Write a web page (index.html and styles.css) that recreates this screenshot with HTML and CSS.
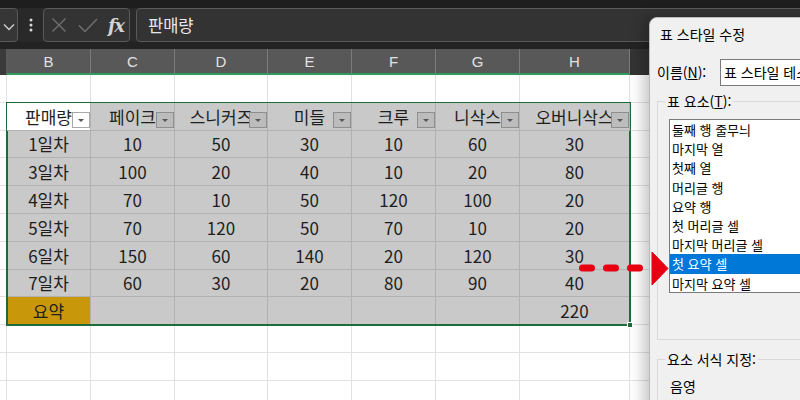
FILE: index.html
```html
<!DOCTYPE html>
<html lang="ko">
<head>
<meta charset="utf-8">
<title>표 스타일 수정</title>
<link rel="stylesheet" href="styles.css">
</head>
<body>
<div class="app">
  <div class="topstrip"></div>
  <div class="fbar">
    <div class="namebox">
      <svg class="chev" width="12" height="8" viewBox="0 0 12 8"><path d="M1 1.5 L6 6.5 L11 1.5" fill="none" stroke="#d0d0d0" stroke-width="1.4"/></svg>
    </div>
    <div class="vdots">
      <svg width="4" height="14" viewBox="0 0 4 14"><circle cx="2" cy="2" r="1.5" fill="#d8d8d8"/><circle cx="2" cy="7" r="1.5" fill="#d8d8d8"/><circle cx="2" cy="12" r="1.5" fill="#d8d8d8"/></svg>
    </div>
    <div class="fxbox">
      <svg class="ico-x" width="16" height="16" viewBox="0 0 16 16"><path d="M1.5 1.5 L14.5 14.5 M14.5 1.5 L1.5 14.5" stroke="#707070" stroke-width="1.4" fill="none"/></svg>
      <svg class="ico-ok" width="20" height="15" viewBox="0 0 20 15"><path d="M1 7.5 L7 13.5 L19 1" stroke="#707070" stroke-width="1.4" fill="none"/></svg>
      <span class="fx">fx</span>
    </div>
    <div class="finput">판매량</div>
  </div>
  <div class="fgap"></div>
  <div class="colheads">
    <div class="ch corner"></div>
    <div class="ch sel">B</div>
    <div class="ch sel">C</div>
    <div class="ch sel">D</div>
    <div class="ch sel">E</div>
    <div class="ch sel">F</div>
    <div class="ch sel">G</div>
    <div class="ch sel">H</div>
    <div class="ch rest"></div>
  </div>
  <div class="sheet">
    <div class="c"></div><div class="c"></div><div class="c"></div><div class="c"></div><div class="c"></div><div class="c"></div><div class="c"></div><div class="c"></div><div class="c"></div>

    <div class="tbl">
      <div class="t th first"><span>판매량</span><i class="fb"></i></div>
      <div class="t th"><span>페이크</span><i class="fb"></i></div>
      <div class="t th"><span>스니커즈</span><i class="fb"></i></div>
      <div class="t th"><span>미들</span><i class="fb"></i></div>
      <div class="t th"><span>크루</span><i class="fb"></i></div>
      <div class="t th"><span>니삭스</span><i class="fb"></i></div>
      <div class="t th"><span>오버니삭스</span><i class="fb"></i></div>

      <div class="t">1일차</div><div class="t">10</div><div class="t">50</div><div class="t">30</div><div class="t">10</div><div class="t">60</div><div class="t">30</div>
      <div class="t">3일차</div><div class="t">100</div><div class="t">20</div><div class="t">40</div><div class="t">10</div><div class="t">20</div><div class="t">80</div>
      <div class="t">4일차</div><div class="t">70</div><div class="t">10</div><div class="t">50</div><div class="t">120</div><div class="t">100</div><div class="t">20</div>
      <div class="t">5일차</div><div class="t">70</div><div class="t">120</div><div class="t">50</div><div class="t">70</div><div class="t">10</div><div class="t">20</div>
      <div class="t">6일차</div><div class="t">150</div><div class="t">60</div><div class="t">140</div><div class="t">20</div><div class="t">120</div><div class="t">30</div>
      <div class="t">7일차</div><div class="t">60</div><div class="t">30</div><div class="t">20</div><div class="t">80</div><div class="t">90</div><div class="t">40</div>
      <div class="t sum">요약</div><div class="t"></div><div class="t"></div><div class="t"></div><div class="t"></div><div class="t"></div><div class="t">220</div>
      <i class="handle"></i>
    </div>

    <div class="c"></div><div class="c"></div>
    <div class="c"></div><div class="c"></div>
    <div class="c"></div><div class="c"></div>
    <div class="c"></div><div class="c"></div>
    <div class="c"></div><div class="c"></div>
    <div class="c"></div><div class="c"></div>
    <div class="c"></div><div class="c"></div>
    <div class="c"></div><div class="c"></div>

    <div class="c"></div><div class="c"></div><div class="c"></div><div class="c"></div><div class="c"></div><div class="c"></div><div class="c"></div><div class="c"></div><div class="c"></div>
    <div class="c"></div><div class="c"></div><div class="c"></div><div class="c"></div><div class="c"></div><div class="c"></div><div class="c"></div><div class="c"></div><div class="c"></div>
    <div class="c"></div><div class="c"></div><div class="c"></div><div class="c"></div><div class="c"></div><div class="c"></div><div class="c"></div><div class="c"></div><div class="c"></div>
  </div>

  <div class="dialog">
    <div class="dtitle">표 스타일 수정</div>
    <div class="namerow">
      <span class="lbl">이름(<u>N</u>):</span>
      <div class="tinput">표 스타일 테스트</div>
    </div>
    <fieldset class="grp grp1">
      <legend>표 요소(<u>T</u>):</legend>
      <div class="listbox">
        <div class="item">둘째 행 줄무늬</div>
        <div class="item">마지막 열</div>
        <div class="item">첫째 열</div>
        <div class="item">머리글 행</div>
        <div class="item">요약 행</div>
        <div class="item">첫 머리글 셀</div>
        <div class="item">마지막 머리글 셀</div>
        <div class="item active">첫 요약 셀</div>
        <div class="item">마지막 요약 셀</div>
      </div>
    </fieldset>
    <fieldset class="grp grp2">
      <legend>요소 서식 지정:</legend>
      <div class="fmt">음영</div>
    </fieldset>
  </div>

  <svg class="arrow" width="100" height="40" viewBox="0 0 100 40">
    <rect x="4" y="14.5" width="16" height="7" rx="3.5" fill="#e60012"/>
    <rect x="28" y="14.5" width="16" height="7" rx="3.5" fill="#e60012"/>
    <rect x="52" y="14.5" width="16" height="7" rx="3.5" fill="#e60012"/>
    <path d="M77 2 L93 18.5 L77 35 Z" fill="#e60012" stroke="#e60012" stroke-width="1" stroke-linejoin="round"/>
  </svg>
</div>
</body>
</html>
```

FILE: styles.css
```css
* { box-sizing: border-box; }
html, body { margin: 0; padding: 0; }
body {
  font-family: "Noto Sans CJK KR", "Noto Sans", sans-serif;
  background: #ffffff;
}
.app {
  position: relative;
  width: 800px;
  height: 400px;
  overflow: hidden;
  background: #ffffff;
}

/* ---------- formula bar ---------- */
.topstrip { height: 8px; background: #1e1e1e; }
.fbar {
  height: 34px;
  background: #292929;
  display: flex;
  align-items: stretch;
}
.namebox {
  width: 28px;
  margin-left: -10px;
  background: #363636;
  border: 1px solid #5a5a5a;
  border-radius: 4px;
  display: flex;
  align-items: center;
  padding-left: 12px;
}
.chev { display: block; margin-top: 3px; }
.vdots {
  width: 25px;
  display: flex;
  align-items: center;
  justify-content: center;
}
.vdots svg { display: block; margin-left: 1px; }
.fxbox {
  width: 87px;
  background: #333333;
  border: 1px solid #5a5a5a;
  border-radius: 4px;
  display: flex;
  align-items: center;
  padding-left: 7px;
}
.ico-x { display: block; }
.ico-ok { display: block; margin-left: 11px; }
.fx {
  margin-left: 10px;
  font-family: "DejaVu Serif", "Liberation Serif", serif;
  font-style: italic;
  font-weight: bold;
  font-size: 18px;
  color: #d4d4d4;
  letter-spacing: -1.5px;
}
.finput {
  margin-left: 6px;
  flex: 1;
  margin-right: -20px;
  background: #333333;
  border: 1px solid #5a5a5a;
  border-radius: 4px;
  display: flex;
  align-items: center;
  padding-left: 11px;
  font-size: 16.5px;
  color: #e8e8e8;
}
.fgap { height: 7px; background: #232323; }

/* ---------- column headers ---------- */
.colheads {
  height: 26px;
  display: grid;
  grid-template-columns: 7px 84px 84px 93px 84px 84px 84px 110px 1fr;
}
.ch {
  background: #585858;
  border-right: 1px solid #7c7c7c;
  display: flex;
  align-items: center;
  justify-content: center;
  font-family: "Liberation Sans", Arial, sans-serif;
  font-size: 15px;
  color: #e2e2e2;
}
.ch.sel { border-bottom: 2px solid #2f9a5c; }
.ch.corner { background: #3a3a3a; border-right: 1px solid #5c5c5c; }
.ch.rest { background: #333333; border-right: none; }

/* ---------- sheet ---------- */
.sheet {
  display: grid;
  grid-template-columns: 7px 84px 84px 93px 84px 84px 84px 110px 1fr;
  grid-template-rows: repeat(12, 27.8px);
}
.c {
  border-right: 1px solid #e1e1e1;
  border-bottom: 1px solid #e1e1e1;
  background: #ffffff;
}
.tbl {
  grid-column: 2 / 9;
  grid-row: 2 / 10;
  position: relative;
  display: grid;
  grid-template-columns: 84px 84px 93px 84px 84px 84px 110px;
  grid-template-rows: repeat(8, 1fr);
  outline: 2px solid #1d6b3a;
  outline-offset: -1px;
  z-index: 1;
}
.t {
  background: #c9c9c9;
  border-right: 1px solid #b2b2b2;
  border-bottom: 1px solid #b2b2b2;
  display: flex;
  align-items: center;
  justify-content: center;
  font-size: 17px;
  color: #1e1e1e;
  white-space: nowrap;
}
.th {
  position: relative;
  overflow: hidden;
}
.th.first { background: #ffffff; }
.fb {
  position: absolute;
  right: 0;
  bottom: 2px;
  width: 18px;
  height: 16px;
  background: #bcbcbc;
  border: 1px solid #8e8e8e;
}
.fb::after {
  content: "";
  position: absolute;
  left: 5px;
  top: 6px;
  border-left: 3px solid transparent;
  border-right: 3px solid transparent;
  border-top: 3px solid #555555;
}
.th.first .fb { background: #ffffff; border-color: #a8a8a8; }
.t.sum { background: #c9980a; }
.handle {
  position: absolute;
  right: -3px;
  bottom: -3px;
  width: 6px;
  height: 6px;
  background: #1d6b3a;
  border: 1px solid #ffffff;
}

/* ---------- dialog ---------- */
.dialog {
  position: absolute;
  left: 649px;
  top: 17px;
  width: 170px;
  height: 400px;
  background: #f0f0f0;
  border: 1px solid #b9b9b9;
  border-top-left-radius: 8px;
  box-shadow: -6px 0 14px rgba(0, 0, 0, 0.22);
  z-index: 5;
  font-size: 14px;
  color: #000000;
}
.dtitle {
  height: 32px;
  display: flex;
  align-items: center;
  padding-left: 10px;
  font-size: 14px;
}
.namerow {
  margin-top: 8px;
  height: 28px;
  display: flex;
  align-items: center;
  padding-left: 7px;
}
.lbl { width: 63px; font-size: 14px; }
.tinput {
  flex: 1;
  height: 27px;
  margin-right: -40px;
  background: #ffffff;
  border: 1px solid #7a7a7a;
  display: flex;
  align-items: center;
  padding-left: 3px;
  white-space: nowrap;
  overflow: hidden;
  font-size: 14px;
}
.grp {
  margin: 0 0 0 7px;
  padding: 0;
  border: 1px solid #d9d9d9;
  border-right: none;
  min-width: 0;
}
.grp legend {
  margin-left: 7px;
  padding: 0 2px;
  font-size: 14px;
  line-height: 20px;
}
.grp1 { margin-top: 5px; padding-bottom: 46px; }
.listbox {
  margin: 8px 0 0 11px;
  height: 174px;
  background: #ffffff;
  border: 1px solid #7a7a7a;
  border-right: none;
  overflow: hidden;
}
.item {
  height: 19.2px;
  line-height: 19.2px;
  padding-left: 2px;
  font-size: 13px;
  white-space: nowrap;
}
.item.active { background: #0078d7; color: #ffffff; }
.grp2 { margin-top: 9px; padding-bottom: 20px; }
.fmt { margin: 7px 0 0 12px; font-size: 14px; line-height: 20px; }

/* ---------- red arrow overlay ---------- */
.arrow {
  position: absolute;
  left: 575px;
  top: 250px;
  z-index: 10;
  display: block;
}
```
